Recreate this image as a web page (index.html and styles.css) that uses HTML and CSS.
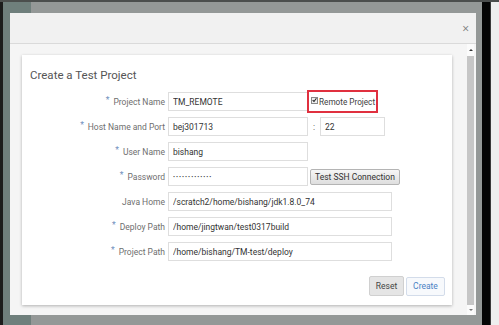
FILE: index.html
```html
<!DOCTYPE html>
<html lang="en">
<head>
    <meta charset="UTF-8">
    <meta name="viewport" content="width=device-width, initial-scale=1.0">
    <title>Create a Test Project</title>
    <link rel="stylesheet" href="styles.css">
</head>
<body>
    <div class="screen">
        <div class="desk">
            <div class="dialog">
                <!-- Dialog Header -->
                <div class="dialog-header">
                    <span class="close">&times;</span>
                </div>

                <!-- Dialog Body -->
                <div class="dialog-body">
                    <div class="scroll-content">
                        <div class="card">
                            <h1 class="card-title">Create a Test Project</h1>

                            <div class="form">
                                <label class="field-label required">Project Name</label>
                                <div class="field">
                                    <input class="input short" type="text" value="TM_REMOTE">
                                    <label class="remote-check">
                                        <span class="checkbox">
                                            <svg width="6" height="6" viewBox="0 0 6 6"><path d="M0.8 3.2 L2.4 4.8 L5.3 0.9" fill="none" stroke="#222" stroke-width="1.3"/></svg>
                                        </span>Remote Project
                                    </label>
                                </div>

                                <label class="field-label required">Host Name and Port</label>
                                <div class="field">
                                    <input class="input short" type="text" value="bej301713">
                                    <span class="port-sep">:</span>
                                    <input class="input port" type="text" value="22">
                                </div>

                                <label class="field-label required">User Name</label>
                                <div class="field">
                                    <input class="input short" type="text" value="bishang">
                                </div>

                                <label class="field-label required">Password</label>
                                <div class="field">
                                    <input class="input short password" type="password" value="bishang123456">
                                    <button class="btn btn-ssh">Test SSH Connection</button>
                                </div>

                                <label class="field-label">Java Home</label>
                                <div class="field">
                                    <input class="input long" type="text" value="/scratch2/home/bishang/jdk1.8.0_74">
                                </div>

                                <label class="field-label required">Deploy Path</label>
                                <div class="field">
                                    <input class="input long" type="text" value="/home/jingtwan/test0317build">
                                </div>

                                <label class="field-label required">Project Path</label>
                                <div class="field">
                                    <input class="input long" type="text" value="/home/bishang/TM-test/deploy">
                                </div>
                            </div>

                            <div class="card-actions">
                                <button class="btn btn-reset">Reset</button>
                                <button class="btn btn-create">Create</button>
                            </div>
                        </div>
                    </div>

                    <!-- Scrollbar -->
                    <div class="scrollbar">
                        <div class="scroll-arrow up"></div>
                        <div class="scroll-thumb"></div>
                        <div class="scroll-arrow down"></div>
                    </div>
                </div>
            </div>
        </div>
        <div class="edge-dark"></div>
        <div class="edge-light"></div>
    </div>
</body>
</html>
```

FILE: styles.css
```css
body {
    margin: 0;
    padding: 0;
    font-family: Roboto, "Open Sans", sans-serif;
}

/* Screenshot frame */
.screen {
    width: 499px;
    height: 325px;
    display: flex;
    box-sizing: border-box;
    border-top: 2px solid #4b4e4d;
    background-color: #000;
}

.desk {
    width: 482px;
    box-sizing: border-box;
    border-left: 3px solid #1c1c1c;
    padding: 11px 6px 0 7px;
    background: linear-gradient(to right, #6f7f7c 0 28px, #949897 28px);
}

.edge-dark {
    width: 8px;
    background-color: #050505;
    border-right: 1px solid #3a3a3a;
}

.edge-light {
    flex: 1;
    background-color: #eeeeee;
}

/* Dialog */
.dialog {
    height: 302px;
    display: flex;
    flex-direction: column;
    background-color: #f5f5f5;
}

.dialog-header {
    height: 30px;
    flex: none;
    display: flex;
    align-items: center;
    justify-content: flex-end;
    padding-right: 7px;
    background-color: #f1f1f1;
    border-bottom: 1px solid #dadada;
}

.close {
    font-family: "Open Sans", sans-serif;
    font-size: 12px;
    line-height: 1;
    color: #7a7a7a;
    margin-top: 2px;
}

.dialog-body {
    flex: 1;
    display: flex;
    min-height: 0;
}

.scroll-content {
    flex: 1;
    padding: 11px 15px 0 12px;
}

.scrollbar {
    width: 7px;
    margin-right: 2px;
    display: flex;
    flex-direction: column;
    background-color: #fbfbfb;
}

.scroll-arrow {
    height: 12px;
    display: flex;
    align-items: center;
    justify-content: center;
}

.scroll-arrow.down {
    height: 10px;
}

.scroll-arrow.up::after {
    content: "";
    border-left: 2px solid transparent;
    border-right: 2px solid transparent;
    border-bottom: 2px solid #333;
}

.scroll-arrow.down::after {
    content: "";
    border-left: 2px solid transparent;
    border-right: 2px solid transparent;
    border-top: 2px solid #777;
}

.scroll-thumb {
    flex: 1;
    background-color: #c6c6c6;
}

/* Card */
.card {
    height: 250px;
    box-sizing: border-box;
    padding: 12px 7px 9px 8px;
    display: flex;
    flex-direction: column;
    background-color: #fff;
    box-shadow: 0 1px 3px rgba(0, 0, 0, 0.28);
}

.card-title {
    margin: 0;
    font-size: 11.5px;
    font-weight: 400;
    line-height: 16px;
    color: #555;
}

.form {
    margin-top: 9px;
    display: grid;
    grid-template-columns: 135px auto;
    column-gap: 3px;
    row-gap: 6px;
    align-items: center;
}

.field-label {
    text-align: right;
    font-size: 8.5px;
    color: #6e6e6e;
}

.required::before {
    content: "*";
    color: #6f8fbd;
    margin-right: 4px;
    position: relative;
    top: -2px;
}

.field {
    display: flex;
    align-items: center;
}

.input {
    height: 19px;
    box-sizing: border-box;
    margin: 0;
    padding: 0 4px;
    border: 1px solid #dedede;
    border-radius: 0;
    font-family: inherit;
    font-size: 8.5px;
    color: #333;
    background-color: #fff;
}

.input.password {
    font-size: 6px;
    letter-spacing: 1px;
}

.input.short {
    width: 140px;
}

.input.long {
    width: 224px;
}

.input.port {
    width: 65px;
}

.port-sep {
    width: 12px;
    text-align: center;
    font-size: 8.5px;
    color: #444;
}

/* Highlighted remote checkbox */
.remote-check {
    display: flex;
    align-items: center;
    height: 19px;
    margin: -2px 0 -2px -1px;
    padding: 0 1px 0 2px;
    border: 2px solid #e0303f;
    font-size: 8.2px;
    color: #3e3e3e;
}

.checkbox {
    width: 5px;
    height: 5px;
    margin-right: 1px;
    margin-top: -3px;
    border: 1px solid #888;
    display: flex;
    align-items: center;
    justify-content: center;
    background-color: #eee;
}

/* Buttons */
.btn {
    font-family: inherit;
    font-size: 8.5px;
    cursor: pointer;
    padding: 0;
}

.btn-ssh {
    height: 16px;
    margin-left: 2px;
    padding: 0 4px;
    color: #333;
    border: 1px solid #b4b4b4;
    border-radius: 2px;
    background: linear-gradient(#f6f6f6, #dedede);
}

.card-actions {
    margin-top: auto;
    display: flex;
    justify-content: flex-end;
    align-items: center;
    gap: 2px;
}

.btn-reset {
    width: 35px;
    height: 20px;
    color: #444;
    border: 1px solid #d0d0d0;
    border-radius: 2px;
    background-color: #e5e5e5;
}

.btn-create {
    width: 39px;
    height: 19px;
    color: #4a82c4;
    border: 1px solid #d3dcea;
    border-radius: 2px;
    background-color: #f7f9fc;
}
```
